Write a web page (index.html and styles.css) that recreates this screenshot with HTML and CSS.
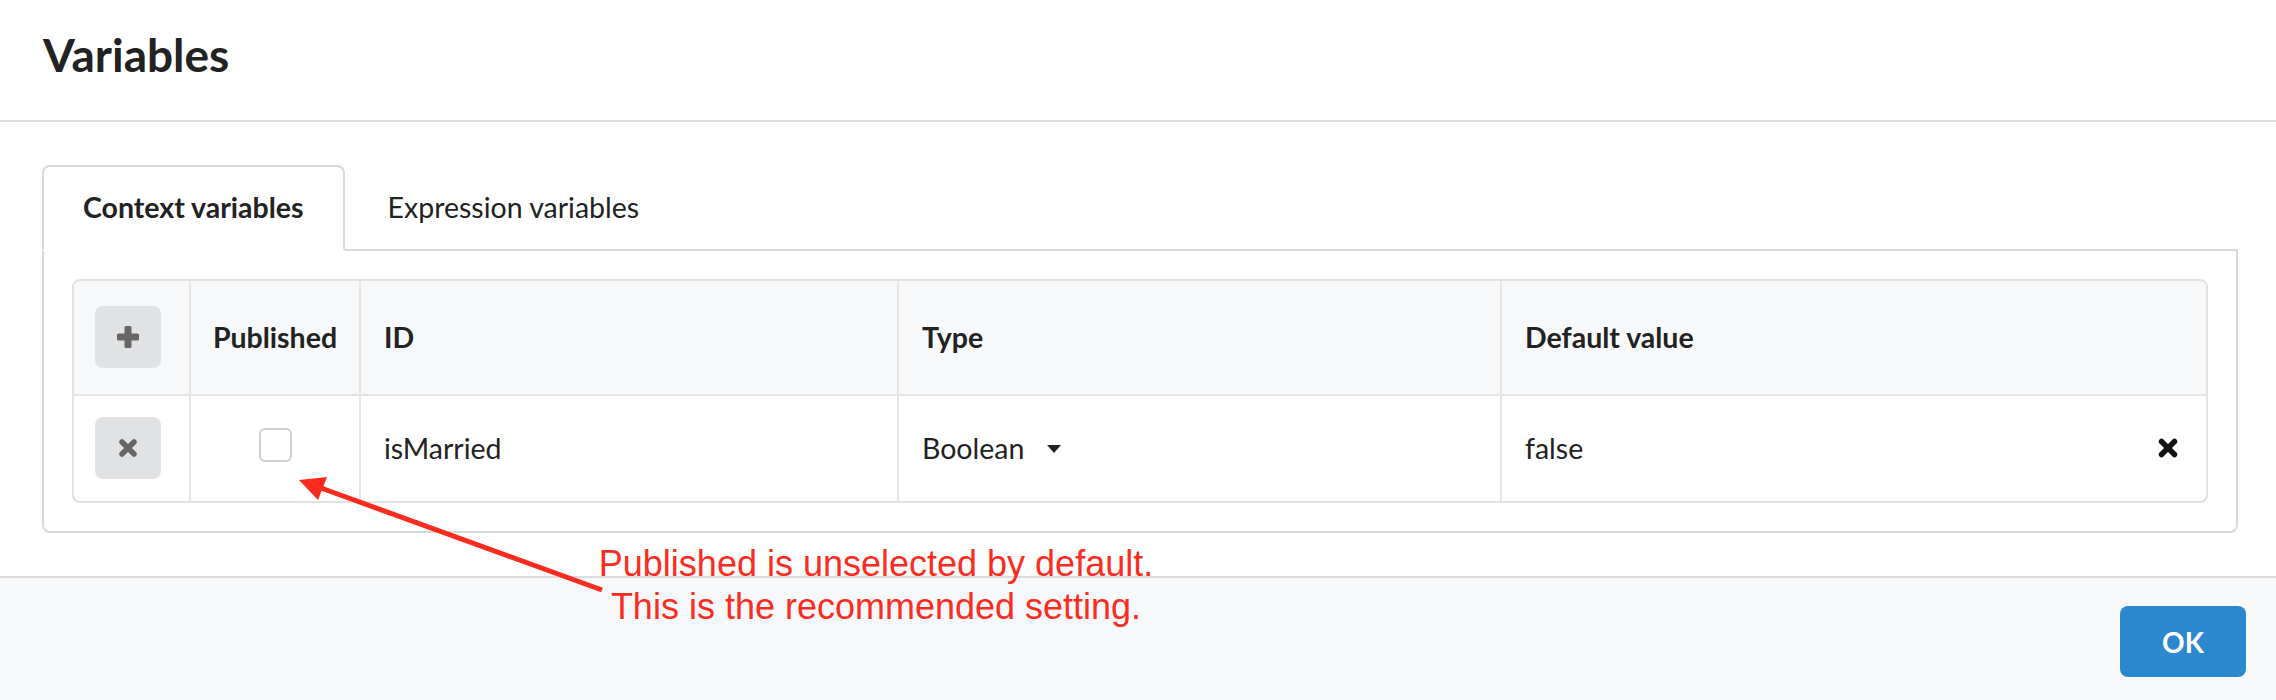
FILE: index.html
```html
<!DOCTYPE html>
<html lang="en">
<head>
<meta charset="utf-8">
<title>Variables</title>
<link rel="stylesheet" href="styles.css">
</head>
<body>
<div class="modal">
  <header class="modal-header">
    <h1 class="title">Variables</h1>
  </header>
  <main class="modal-body">
    <div class="tabs">
      <div class="tab active">Context variables</div>
      <div class="tab">Expression variables</div>
    </div>
    <div class="panel">
      <table class="vars">
        <colgroup>
          <col class="w-btn">
          <col class="w-pub">
          <col class="w-id">
          <col class="w-type">
          <col>
        </colgroup>
        <thead>
          <tr>
            <th class="c-btn"><button class="icon-btn" type="button"><svg width="22" height="22" viewBox="0 0 22 22"><rect x="7.5" y="0" width="7" height="22" rx="1.5" fill="#666"/><rect x="0" y="7.5" width="22" height="7" rx="1.5" fill="#666"/></svg></button></th>
            <th class="c-pub">Published</th>
            <th>ID</th>
            <th>Type</th>
            <th class="last">Default value</th>
          </tr>
        </thead>
        <tbody>
          <tr>
            <td class="c-btn"><button class="icon-btn" type="button"><svg width="18" height="18" viewBox="0 0 18 18"><path d="M3 3 L15 15 M15 3 L3 15" stroke="#666" stroke-width="5.5" stroke-linecap="round" fill="none"/></svg></button></td>
            <td class="c-pub"><span class="checkbox"></span></td>
            <td>isMarried</td>
            <td><span class="select">Boolean<svg class="caret" width="14" height="8" viewBox="0 0 14 8"><polygon points="0,0 14,0 7,8" fill="#222"/></svg></span></td>
            <td class="last"><div class="value"><span>false</span><svg width="20" height="20" viewBox="0 0 20 20"><path d="M3.5 3.5 L16.5 16.5 M16.5 3.5 L3.5 16.5" stroke="#111" stroke-width="5.5" stroke-linecap="round" fill="none"/></svg></div></td>
          </tr>
        </tbody>
      </table>
    </div>
  </main>
  <footer class="modal-footer">
    <button class="ok" type="button">OK</button>
  </footer>

  <svg class="arrow" width="2276" height="700" viewBox="0 0 2276 700">
    <line x1="321" y1="488" x2="602" y2="590" stroke="#fb2c1f" stroke-width="5"/>
    <polygon points="299,480 318,500 327,477" fill="#fb2c1f"/>
  </svg>
  <div class="note">Published is unselected by default.<br>This is the recommended setting.</div>
</div>
</body>
</html>
```

FILE: styles.css
```css
* { box-sizing: border-box; }

html, body {
  margin: 0;
  padding: 0;
  background: #ffffff;
}

body {
  font-family: Lato, "Open Sans", sans-serif;
  color: #222;
}

.modal {
  position: relative;
  width: 2276px;
  height: 700px;
  display: flex;
  flex-direction: column;
  overflow: hidden;
}

.modal-header {
  padding: 26px 43px 36px;
  border-bottom: 2px solid #dedede;
}

.title {
  margin: 0;
  font-size: 46px;
  line-height: 58px;
  font-weight: 700;
  color: #222;
}

.modal-body {
  padding: 43px 38px 43px 42px;
}

.tabs {
  display: flex;
  border-bottom: 2px solid #d9d9d9;
}

.tab {
  position: relative;
  font-size: 28.5px;
  line-height: 34px;
  padding: 23px 39px 25px;
  border: 2px solid transparent;
  margin-bottom: -2px;
  margin-right: 2px;
  color: #222;
}

.tab.active {
  font-weight: 700;
  border-color: #d9d9d9;
  border-bottom-color: #ffffff;
  border-radius: 8px 8px 0 0;
  background: #ffffff;
}

.panel {
  border: 2px solid #d9d9d9;
  border-top: none;
  border-radius: 0 0 8px 8px;
  padding: 28px;
}

.vars {
  width: 100%;
  table-layout: fixed;
  border-collapse: separate;
  border-spacing: 0;
  border: 2px solid #e2e2e2;
  border-radius: 8px;
  font-size: 28.5px;
  line-height: 34px;
}

.w-btn { width: 117px; }
.w-pub { width: 170px; }
.w-id { width: 538px; }
.w-type { width: 603px; }

.vars th,
.vars td {
  text-align: left;
  vertical-align: middle;
  border-right: 2px solid #e6e6e6;
  padding: 0 22px 0 23px;
}

.vars th.last,
.vars td.last {
  border-right: none;
}

.vars th {
  background: #f7f8fa;
  font-weight: 700;
  color: #222;
  padding-top: 25px;
  padding-bottom: 26px;
  border-bottom: 2px solid #e2e2e2;
}

.vars thead th:first-child { border-top-left-radius: 6px; }
.vars thead th:last-child { border-top-right-radius: 6px; }

.vars td {
  padding-top: 21px;
  padding-bottom: 22px;
  color: #222;
}

.vars .c-btn {
  padding-left: 21px;
  padding-right: 0;
}

.vars .c-pub {
  text-align: center;
  padding-left: 0;
  padding-right: 0;
}

.icon-btn {
  display: flex;
  align-items: center;
  justify-content: center;
  width: 66px;
  height: 62px;
  border: none;
  border-radius: 8px;
  background: #e1e2e4;
  padding: 0;
  margin: 0;
}

.checkbox {
  display: block;
  width: 33px;
  height: 34px;
  margin: -7px auto 0;
  border: 2px solid #d0d0d0;
  border-radius: 6px;
  background: #fff;
}

.select {
  display: inline-flex;
  align-items: center;
  gap: 23px;
}

.caret {
  display: block;
  margin-top: 2px;
}

.value {
  display: flex;
  align-items: center;
  justify-content: space-between;
  padding-right: 6px;
}

.value svg {
  display: block;
}

.modal-footer {
  flex: 1;
  display: flex;
  justify-content: flex-end;
  align-items: flex-start;
  background: #f7f8fa;
  border-top: 2px solid #dcdcdc;
  padding: 28px 30px 0 0;
}

.ok {
  width: 126px;
  height: 71px;
  border: none;
  border-radius: 8px;
  background: #2b88cf;
  color: #ffffff;
  font-family: Lato, "Open Sans", sans-serif;
  font-size: 28px;
  font-weight: 700;
  padding: 0;
}

.arrow {
  position: absolute;
  left: 0;
  top: 0;
  pointer-events: none;
}

.note {
  position: absolute;
  left: 576px;
  top: 542px;
  width: 600px;
  text-align: center;
  font-family: "Liberation Sans", Arial, sans-serif;
  font-size: 36px;
  line-height: 43px;
  color: #fb2c1f;
}
```
